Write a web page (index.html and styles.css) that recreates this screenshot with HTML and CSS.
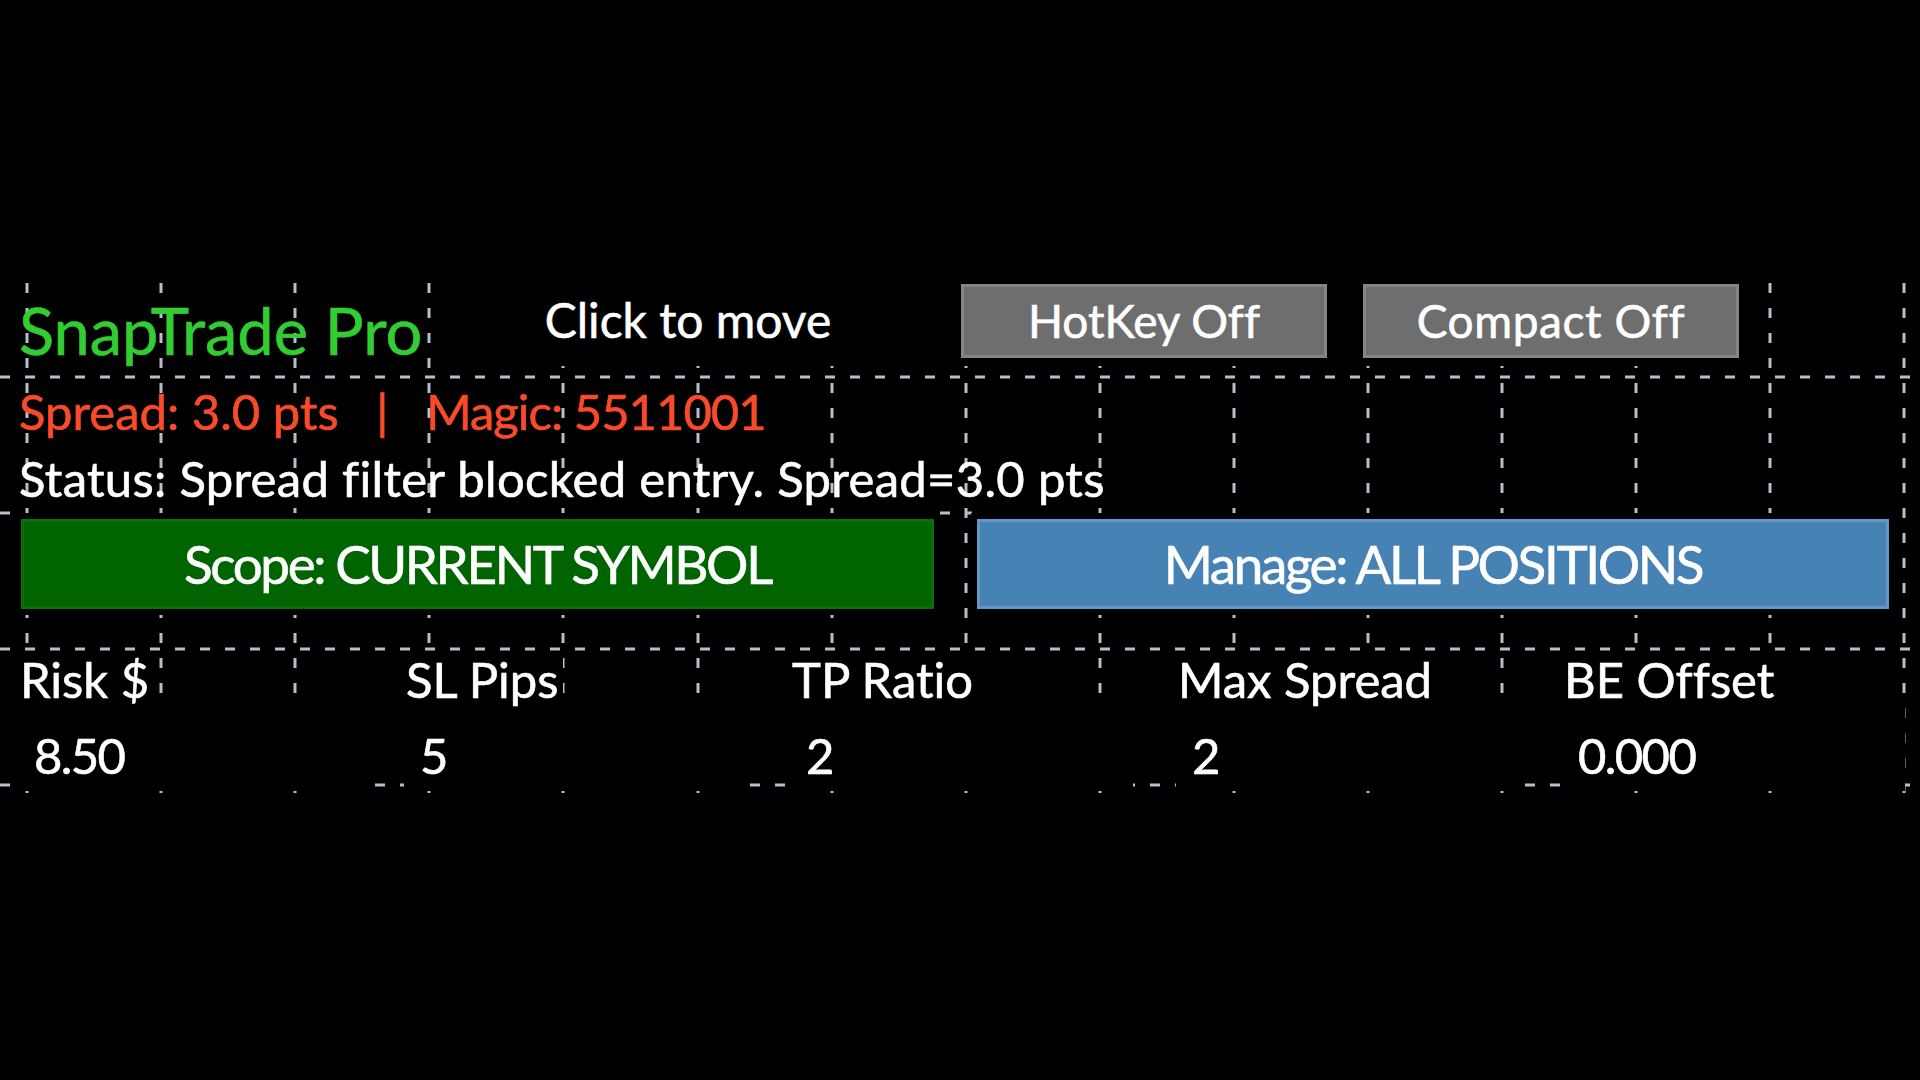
FILE: index.html
```html
<!DOCTYPE html>
<html lang="en">
<head>
  <meta charset="UTF-8" />
  <meta name="viewport" content="width=device-width, initial-scale=1.0" />
  <title>SnapTrade Pro</title>
  <link rel="stylesheet" href="styles.css">
</head>
<body>

  <div class="chart">
    <!-- chart grid behind the panel -->
    <svg class="grid" width="1920" height="517" viewBox="0 0 1920 517">
      <g class="grid-v">
        <line x1="27" y1="0" x2="27" y2="517" />
        <line x1="161" y1="0" x2="161" y2="517" />
        <line x1="295" y1="0" x2="295" y2="517" />
        <line x1="429" y1="0" x2="429" y2="517" />
        <line x1="563" y1="0" x2="563" y2="517" />
        <line x1="698" y1="0" x2="698" y2="517" />
        <line x1="832" y1="0" x2="832" y2="517" />
        <line x1="966" y1="0" x2="966" y2="517" />
        <line x1="1100" y1="0" x2="1100" y2="517" />
        <line x1="1234" y1="0" x2="1234" y2="517" />
        <line x1="1368" y1="0" x2="1368" y2="517" />
        <line x1="1502" y1="0" x2="1502" y2="517" />
        <line x1="1636" y1="0" x2="1636" y2="517" />
        <line x1="1770" y1="0" x2="1770" y2="517" />
        <line x1="1904" y1="0" x2="1904" y2="517" />
      </g>
      <g class="grid-h">
        <line x1="0" y1="94" x2="1920" y2="94" />
        <line x1="0" y1="230" x2="18" y2="230" />
        <line x1="940" y1="230" x2="972" y2="230" />
        <line x1="0" y1="366" x2="1920" y2="366" />
        <line x1="0" y1="502" x2="1920" y2="502" />
      </g>
    </svg>

    <div class="panel">
      <div class="head">
        <div class="title">SnapTrade Pro</div>
        <div class="head-right">
          <div class="handle">Click to move</div>
          <button class="btn-gray hotkey">HotKey Off</button>
          <button class="btn-gray compact">Compact Off</button>
        </div>
      </div>

      <div class="info spread">Spread: 3.0 pts   |   <span class="magic">Magic: 5511001</span></div>
      <div class="info status">Status: Spread filter blocked entry. Spread=3.0 pts</div>

      <div class="modes">
        <button class="mode scope">Scope: CURRENT SYMBOL</button>
        <button class="mode manage">Manage: ALL POSITIONS</button>
      </div>

      <div class="params">
        <div class="param">
          <div class="param-label"><span>Risk $</span></div>
          <div class="param-field">8.50</div>
        </div>
        <div class="param">
          <div class="param-label"><span>SL Pips</span></div>
          <div class="param-field">5</div>
        </div>
        <div class="param">
          <div class="param-label"><span>TP Ratio</span></div>
          <div class="param-field">2</div>
        </div>
        <div class="param">
          <div class="param-label"><span>Max Spread</span></div>
          <div class="param-field">2</div>
        </div>
        <div class="param">
          <div class="param-label"><span>BE Offset</span></div>
          <div class="param-field">0.000</div>
        </div>
      </div>
    </div>
  </div>

</body>
</html>
```

FILE: styles.css
```css
* {
  box-sizing: border-box;
}

body {
  margin: 0;
  background: #000;
  color: #fff;
  font-family: Lato, "Open Sans", sans-serif;
  font-size: 49px;
  font-variant-ligatures: none;
  -webkit-text-stroke: 0.6px currentColor;
  overflow: hidden;
}

.chart {
  position: relative;
  margin-top: 283px;
  height: 517px;
}

.grid {
  position: absolute;
  top: 0;
  left: 0;
}

.grid line {
  stroke: #b4bfcb;
  stroke-width: 3;
  stroke-dasharray: 10 15;
}

.panel {
  position: relative;
}

/* header row */
.head {
  display: flex;
  height: 83px;
}

.title {
  width: 445px;
  padding: 11px 0 0 19px;
  line-height: 72px;
  font-size: 65px;
  color: #32cd32;
  white-space: nowrap;
}

.head-right {
  display: flex;
  width: 1300px;
  background: #000;
}

.handle {
  width: 486px;
  margin-right: 30px;
  padding-top: 1px;
  font-size: 48px;
  line-height: 72px;
  text-align: center;
}

.btn-gray {
  height: 74px;
  margin-top: 1px;
  padding: 0;
  border: 3px solid #858585;
  background: #6e6e6e;
  color: #fff;
  font: inherit;
  font-size: 46px;
  line-height: 66px;
  text-align: center;
}

.hotkey {
  width: 366px;
  margin-right: 36px;
}

.compact {
  width: 376px;
  letter-spacing: 0.6px;
}

/* info lines */
.spread {
  margin-top: 12px;
  color: #fa4a2a;
}

.magic {
  letter-spacing: -1px;
}

.info {
  height: 67px;
  padding-left: 19px;
  line-height: 67px;
  white-space: pre;
}

.status {
  letter-spacing: 0.3px;
}

/* scope / manage buttons */
.modes {
  display: flex;
  gap: 43px;
  margin: 7px 0 43px 21px;
}

.mode {
  width: 913px;
  height: 90px;
  padding: 0;
  border: 3px solid;
  color: #fff;
  font: inherit;
  font-size: 53px;
  letter-spacing: -2.4px;
  line-height: 80px;
  text-align: center;
  box-shadow: 0 0 0 6px #000;
}

.scope {
  background: #006400;
  border-color: #0a6e0a;
}

.manage {
  width: 912px;
  background: #4682b4;
  border-color: #6397c8;
}

/* inputs */
.params {
  display: grid;
  grid-template-columns: repeat(5, 343px);
  column-gap: 43px;
  padding-left: 18px;
}

.param-label {
  height: 52px;
  padding-top: 1px;
  line-height: 52px;
}

.param-label span {
  display: inline-block;
  padding: 0 4px;
  margin-left: -2px;
  background: #000;
}

.param-field {
  height: 87px;
  padding: 13px 0 0 16px;
  line-height: 76px;
  letter-spacing: -1.6px;
  background: #000;
}
```
